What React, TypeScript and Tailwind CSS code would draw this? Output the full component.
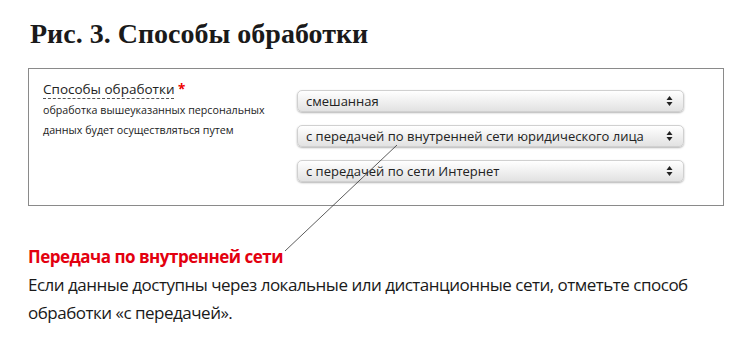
import React from "react";

function Select({ text }: { text: string }) {
  return (
    <div className="relative flex h-[22px] w-[387px] items-center rounded-[5px] border border-[#d0d0d0] bg-gradient-to-b from-[#ffffff] to-[#e2e2e2] pl-[8px] pr-[10px] text-[13px] leading-none text-[#222] shadow-[0_1px_2px_rgba(0,0,0,0.3)]">
      <span className="flex-1 whitespace-nowrap">{text}</span>
      <svg width="7" height="12" viewBox="0 0 7 12" className="shrink-0">
        <path d="M3.5 1 L6.5 5 L0.5 5 Z" fill="#222" />
        <path d="M3.5 11 L6.5 7 L0.5 7 Z" fill="#222" />
      </svg>
    </div>
  );
}

export default function App() {
  return (
    <div className="relative h-[338px] w-[750px] overflow-hidden bg-white" style={{ fontFamily: '"Open Sans", sans-serif' }}>
      <div className="pl-[30px] pt-[17px]">
        <h1 className="text-[28px] font-bold leading-[33px] text-[#1a1a1a]" style={{ fontFamily: '"Liberation Serif", serif' }}>
          Рис. 3. Способы обработки
        </h1>
      </div>
      <div className="ml-[28px] mt-[18px] flex h-[138px] w-[696px] border border-[#8a8a8a] pl-[14px] pt-[10px]">
        <div className="w-[254px]">
          <div className="text-[13.5px] leading-[20px] text-[#222]">
            <span className="border-b border-dashed border-[#555]">Способы обработки</span>{" "}
            <span className="font-bold text-[#e00]">*</span>
          </div>
          <div className="mt-[1px] text-[10.7px] leading-[20px] text-[#222]">
            обработка вышеуказанных персональных
            <br />
            данных будет осуществляться путем
          </div>
        </div>
        <div className="flex flex-col gap-[13px] pt-[11px]">
          <Select text="смешанная" />
          <Select text="с передачей по внутренней сети юридического лица" />
          <Select text="с передачей по сети Интернет" />
        </div>
      </div>
      <div className="ml-[28px] mt-[40px] text-[17px] font-bold leading-[22px] tracking-[-0.5px] text-[#e3000f]">
        Передача по внутренней сети
      </div>
      <div className="ml-[28px] mt-[3px] w-[700px] text-[17px] leading-[28px] tracking-[-0.5px] text-[#1a1a1a]">
        Если данные доступны через локальные или дистанционные сети, отметьте способ обработки «с передачей».
      </div>
      <svg className="pointer-events-none absolute left-0 top-0" width="750" height="338">
        <line x1="397" y1="145" x2="285" y2="251" stroke="#333" strokeWidth="0.8" />
      </svg>
    </div>
  );
}
